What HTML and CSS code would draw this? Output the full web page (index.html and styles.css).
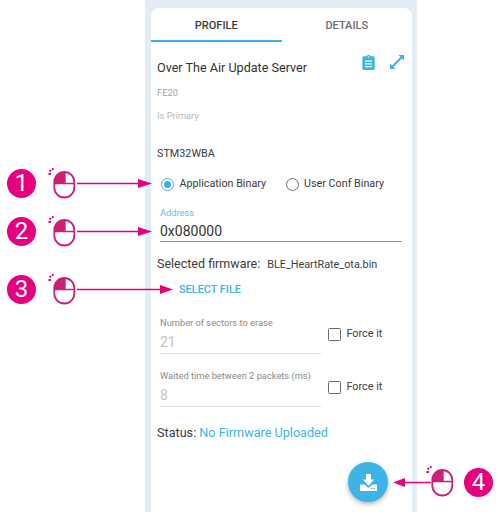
FILE: index.html
```html
<!DOCTYPE html>
<html lang="en">
<head>
    <meta charset="UTF-8">
    <meta name="viewport" content="width=device-width, initial-scale=1.0">
    <title>Over The Air Update Server</title>
    <link rel="stylesheet" href="styles.css">
</head>
<body>
    <svg class="defs" width="0" height="0">
        <symbol id="mouse" viewBox="0 0 30 32">
            <path d="M17 5A10 10 0 0 0 6.300 15V16.500H17Z" fill="#cc1f76"/>
            <rect x="6.300" y="5" width="20" height="25.500" rx="10" fill="none" stroke="#cc1f76" stroke-width="1.800"/>
            <path d="M6.300 16.500H26.300M17 5V16.500" fill="none" stroke="#cc1f76" stroke-width="1.300"/>
            <path d="M4.500 1L5 3M1.500 3L3 4.500M.5 7H3" stroke="#e6007e" stroke-width="1.800" fill="none"/>
        </symbol>
    </svg>

    <div class="phone">
        <div class="card">
            <div class="tabs">
                <div class="tab active">PROFILE</div>
                <div class="tab">DETAILS</div>
            </div>

            <div class="service">
                <div class="service-head">
                    <span class="service-name">Over The Air Update Server</span>
                    <div class="service-icons">
                        <svg width="13" height="15" viewBox="3 1 18 22"><path fill="#3db4e6" d="M19 3h-4.200C14.400 1.800 13.300 1 12 1s-2.400.8-2.800 2H5C3.900 3 3 3.900 3 5v16c0 1.100.9 2 2 2h14c1.100 0 2-.9 2-2V5c0-1.100-.9-2-2-2zm-7 0c.6 0 1 .4 1 1s-.4 1-1 1-1-.4-1-1 .4-1 1-1zm5 16H7v-2h10v2zm0-4H7v-2h10v2zm0-4H7V9h10v2z"/></svg>
                        <svg width="14" height="14" viewBox="2 2 20 20"><path fill="#3db4e6" d="M22 2h-8l3 3L5 17l-3-3v8h8l-3-3L19 7l3 3z"/></svg>
                    </div>
                </div>
                <div class="service-uuid">FE20</div>
                <div class="service-type">Is Primary</div>
            </div>

            <div class="board">STM32WBA</div>

            <div class="radios">
                <label class="radio"><span class="radio-dot on"></span>Application Binary</label>
                <label class="radio"><span class="radio-dot"></span>User Conf Binary</label>
            </div>

            <div class="address">
                <div class="address-label">Address</div>
                <div class="address-value">0x080000</div>
            </div>

            <div class="firmware">
                <span class="firmware-label">Selected firmware:</span>
                <span class="firmware-name">BLE_HeartRate_ota.bin</span>
            </div>

            <div class="select-file">SELECT FILE</div>

            <div class="option">
                <div class="option-field">
                    <div class="option-label">Number of sectors to erase</div>
                    <div class="option-value">21</div>
                </div>
                <label class="check"><span class="check-box"></span>Force it</label>
            </div>

            <div class="option">
                <div class="option-field">
                    <div class="option-label">Waited time between 2 packets (ms)</div>
                    <div class="option-value">8</div>
                </div>
                <label class="check"><span class="check-box"></span>Force it</label>
            </div>

            <div class="status">Status: <span class="status-value">No Firmware Uploaded</span></div>
        </div>

        <div class="fab">
            <svg width="17" height="17" viewBox="0 0 17 17">
                <path fill="#fff" d="M6 0H11V5.500H14L8.500 12L3 5.500H6Z"/>
                <path fill="#fff" d="M0 10.500H4.500L8.500 14L12.500 10.500H17V17H0Z"/>
                <path fill="#3db4e6" d="M11 14h1.500v1H11zM13.500 14H15v1h-1.500z"/>
            </svg>
        </div>
    </div>

    <!-- callouts drawn over the screenshot -->
    <div class="num num1">1</div>
    <div class="num num2">2</div>
    <div class="num num3">3</div>
    <div class="num num4">4</div>
    <svg class="mouse mouse1"><use href="#mouse"/></svg>
    <svg class="mouse mouse2"><use href="#mouse"/></svg>
    <svg class="mouse mouse3"><use href="#mouse"/></svg>
    <svg class="mouse mouse4"><use href="#mouse"/></svg>
    <svg class="arrows" width="500" height="512" viewBox="0 0 500 512">
        <path d="M77 183.500H141M77 231.500H141M77 289.500H161M431 482.500H404" stroke="#e6007e" stroke-width="1.600" fill="none"/>
        <path d="M138 179L152 183.500L138 188Z M138 227L152 231.500L138 236Z M160 285L173 289.500L160 294Z M405 478L393 482.500L405 487Z" fill="#e6007e"/>
    </svg>
</body>
</html>
```

FILE: styles.css
```css
/* General Styles */
body {
    margin: 0;
    width: 500px;
    height: 512px;
    overflow: hidden;
    position: relative;
    background: #fff;
    font-family: Roboto, sans-serif;
    color: #3c3c3c;
}

.defs {
    position: absolute;
}

/* Phone frame */
.phone {
    margin-left: 145px;
    width: 272px;
    height: 512px;
    box-sizing: border-box;
    padding: 8px 5px 0 6px;
    background: #e3ebf4;
}

.card {
    height: 504px;
    box-sizing: border-box;
    background: #fff;
    border-radius: 8px 8px 0 0;
}

/* Tabs */
.tabs {
    display: flex;
}

.tab {
    flex: 1;
    height: 34px;
    box-sizing: border-box;
    padding-top: 11px;
    text-align: center;
    font-size: 11px;
    font-weight: 500;
    line-height: 13px;
    color: #6e6e6e;
}

.tab.active {
    color: #3c3c3c;
    border-bottom: 2px solid #3db4e6;
}

/* Service header */
.service {
    padding: 9px 8px 0 6px;
}

.service-head {
    display: flex;
    justify-content: space-between;
    height: 36px;
}

.service-name {
    font-size: 12.600px;
    line-height: 34px;
    color: #333;
}

.service-icons {
    display: flex;
    gap: 15px;
    align-items: center;
    height: 22px;
}

.service-uuid,
.service-type {
    font-size: 9.300px;
    line-height: 11px;
    color: #a0a0a0;
}

.service-type {
    margin-top: 12px;
    color: #b8b8b8;
}

.board {
    margin: 26px 0 0 6px;
    font-size: 10.800px;
    line-height: 13px;
}

/* Radios */
.radios {
    display: flex;
    gap: 19.500px;
    margin: 16px 0 0 10px;
}

.radio {
    display: flex;
    align-items: center;
    gap: 5.500px;
    font-size: 10.750px;
    line-height: 16px;
}

.radio-dot {
    width: 11px;
    height: 11px;
    border: 1.500px solid #707070;
    border-radius: 50%;
    position: relative;
}

.radio-dot.on {
    border-color: #3db4e6;
}

.radio-dot.on::after {
    content: "";
    position: absolute;
    inset: 2px;
    border-radius: 50%;
    background: #3db4e6;
}

/* Address field */
.address {
    margin: 15px 10px 0 9px;
    padding-bottom: 1px;
    border-bottom: 1.500px solid #3db4e6;
}

.address-label {
    font-size: 9.300px;
    line-height: 11px;
    color: #5cc0ea;
}

.address-value {
    margin-top: 4px;
    font-size: 14px;
    line-height: 18px;
    color: #333;
}

/* Firmware */
.firmware {
    display: flex;
    align-items: baseline;
    gap: 7px;
    margin: 14px 0 0 6px;
}

.firmware-label {
    font-size: 12.500px;
    line-height: 16px;
}

.firmware-name {
    font-size: 10.800px;
}

.select-file {
    margin: 11px 0 0 28px;
    font-size: 10.900px;
    font-weight: 500;
    line-height: 14px;
    color: #3db4e6;
}

/* Sector and delay options */
.option {
    display: flex;
    align-items: flex-start;
    margin: 0 0 0 9px;
    height: 53px;
}

.select-file + .option {
    margin-top: 20px;
}

.option-field {
    width: 161px;
    height: 37px;
    box-sizing: border-box;
    border-bottom: 1px solid #dcdcdc;
}

.option-label {
    font-size: 9.300px;
    line-height: 11px;
    color: #8a8a8a;
}

.option-value {
    margin-top: 5px;
    font-size: 14px;
    line-height: 18px;
    color: #c4c4c4;
}

.check {
    display: flex;
    align-items: center;
    gap: 5.500px;
    margin: 10px 0 0 7px;
    font-size: 10.800px;
    line-height: 14px;
}

.check-box {
    width: 11px;
    height: 11px;
    border: 1.500px solid #6a6a6a;
    border-radius: 1.500px;
}

.status {
    margin: 2px 0 0 6px;
    font-size: 12.650px;
    line-height: 16px;
}

.status-value {
    color: #3db4e6;
}

/* Action button */
.fab {
    position: absolute;
    left: 348px;
    top: 462px;
    width: 40px;
    height: 40px;
    border-radius: 50%;
    background: #3db4e6;
    box-shadow: 0 2px 5px rgba(0, 0, 0, 0.3);
    display: flex;
    align-items: center;
    justify-content: center;
}

/* Callouts */
.num {
    position: absolute;
    left: 7px;
    width: 29px;
    height: 29px;
    border-radius: 50%;
    background: #e6007e;
    color: #fff;
    font-size: 24px;
    line-height: 29px;
    text-align: center;
}

.num1 { top: 169px; }
.num2 { top: 217px; }
.num3 { top: 275px; }
.num4 { top: 468px; left: 464px; }

.mouse {
    position: absolute;
    left: 48px;
    width: 30px;
    height: 32px;
}

.mouse1 { top: 167px; }
.mouse2 { top: 215px; }
.mouse3 { top: 273px; }
.mouse4 { top: 465px; left: 426px; }

.arrows {
    position: absolute;
    left: 0;
    top: 0;
}
```
